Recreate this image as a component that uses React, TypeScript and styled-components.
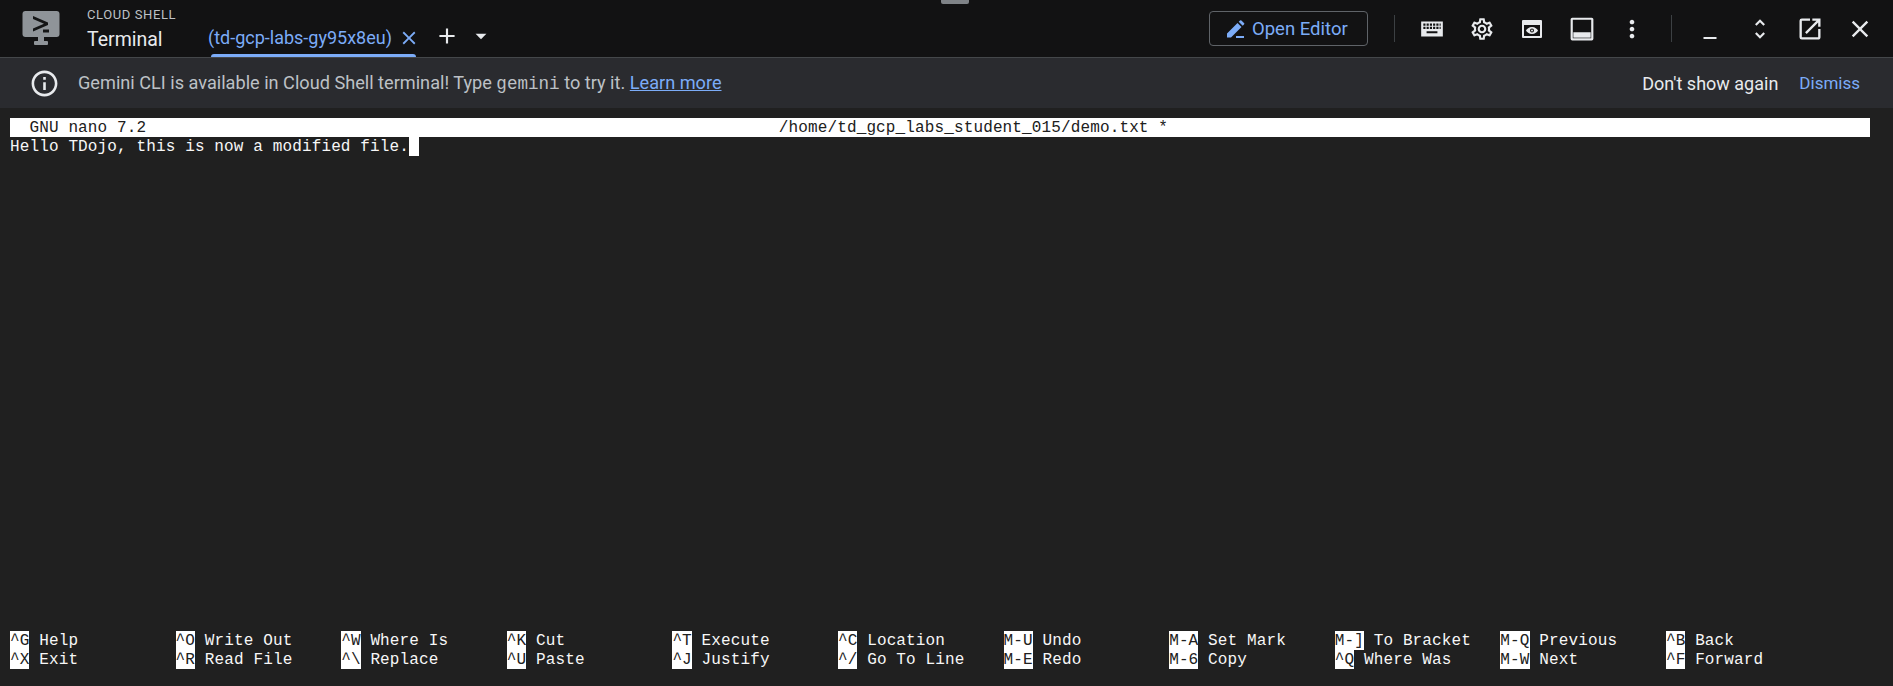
import React from "react";
import styled, { createGlobalStyle } from "styled-components";
import {
  MdAdd,
  MdArrowDropDown,
  MdClose,
  MdInfoOutline,
  MdMoreVert,
  MdOpenInNew,
  MdOutlineSettings,
  MdUnfoldMore,
} from "react-icons/md";

const CELL = 9.73;

const GlobalStyle = createGlobalStyle`
  html, body {
    margin: 0;
    height: 100%;
    overflow: hidden;
    background: #202020;
  }
  #root {
    height: 100%;
  }
`;

const Shell = styled.div`
  position: relative;
  display: flex;
  flex-direction: column;
  height: 686px;
  font-family: Roboto, "Liberation Sans", sans-serif;
`;

const DragHandle = styled.div`
  position: absolute;
  top: 0;
  left: 941px;
  width: 28px;
  height: 4px;
  border-radius: 0 0 2px 2px;
  background: #7f8387;
`;

const Header = styled.header`
  display: flex;
  align-items: stretch;
  flex: none;
  height: 57px;
  padding-left: 22px;
  background: #121213;
  border-bottom: 1px solid #44474a;
`;

const Logo = styled.div`
  display: flex;
  align-items: center;
  width: 65px;
  flex: none;
`;

const Titles = styled.div`
  display: flex;
  flex-direction: column;
  width: 122px;
  flex: none;
  padding-top: 7px;
`;

const Overline = styled.div`
  font-size: 13px;
  line-height: 16px;
  letter-spacing: 0.6px;
  color: #bdc1c6;
`;

const TerminalTitle = styled.div`
  margin-top: 5px;
  font-size: 19.5px;
  line-height: 24px;
  color: #e8eaed;
`;

const Tab = styled.div`
  position: relative;
  display: flex;
  align-items: center;
  gap: 6px;
  width: 205px;
  height: 57px;
  flex: none;
  box-sizing: border-box;
  margin-left: 2px;
  padding-top: 18px;
  color: #7cacf8;
  font-size: 18px;
  white-space: nowrap;

  &::after {
    content: "";
    position: absolute;
    left: 0;
    right: 0;
    bottom: 0;
    height: 3px;
    border-radius: 3px 3px 0 0;
    background: #7cacf8;
  }
`;

const TabText = styled.span`
  margin-left: -3px;
`;

const TabAction = styled.span<{ $blue?: boolean }>`
  display: flex;
  align-items: center;
  justify-content: center;
  color: ${(p) => (p.$blue ? "#7cacf8" : "#e8eaed")};
`;

const TabActions = styled.div`
  display: flex;
  align-items: center;
  gap: 8px;
  margin-left: 18px;
  padding-top: 14px;
`;

const Actions = styled.div`
  display: flex;
  align-items: center;
  margin-left: auto;
  padding-right: 8px;
`;

const EditorButton = styled.button`
  display: flex;
  align-items: center;
  gap: 7px;
  width: 159px;
  height: 35px;
  box-sizing: border-box;
  padding: 0 0 0 17px;
  background: transparent;
  border: 1px solid #5f6368;
  border-radius: 4px;
  color: #7cacf8;
  font-family: inherit;
  font-size: 18.500px;
`;

const Divider = styled.div<{ $left: number; $right: number }>`
  width: 1px;
  height: 27px;
  background: #3c4043;
  margin: ${(p) => `0 ${p.$right}px 0 ${p.$left}px`};
`;

const IconButton = styled.span`
  display: flex;
  align-items: center;
  justify-content: center;
  width: 50px;
  height: 50px;
  color: #e8eaed;
`;

const Banner = styled.div`
  display: flex;
  align-items: center;
  flex: none;
  height: 50px;
  padding: 0 33px 0 29px;
  background: #2a2b2f;
  font-size: 18.150px;
  color: #bdc1c6;
`;

const BannerMessage = styled.div`
  margin-left: 18px;
  white-space: pre;
`;

const InlineCode = styled.code`
  font-family: "Liberation Mono", monospace;
  font-size: 17.600px;
`;

const BannerLink = styled.a`
  color: #7cacf8;
  text-decoration: underline;
`;

const BannerActions = styled.div`
  display: flex;
  align-items: center;
  gap: 21px;
  margin-left: auto;
`;

const DontShow = styled.span`
  font-size: 18px;
  color: #e8eaed;
`;

const Dismiss = styled.span`
  font-size: 17px;
  color: #7cacf8;
`;

const Terminal = styled.main`
  display: flex;
  flex-direction: column;
  flex: 1;
  min-height: 0;
  padding: 10px 23px 17px 10px;
  background: #202020;
  font-family: "Liberation Mono", monospace;
  font-size: 16px;
  letter-spacing: 0.13px;
  line-height: 21px;
  color: #f7f7f7;
`;

const Line = styled.div`
  height: 19px;
  white-space: pre;
  flex: none;
`;

const TitleLine = styled(Line)`
  background: #fff;
  color: #202020;
`;

const Cursor = styled.span`
  display: inline-block;
  width: ${CELL}px;
  height: 19px;
  vertical-align: top;
  background: #fff;
`;

const Shortcuts = styled.div`
  display: grid;
  grid-template-columns: repeat(11, 165.6px);
  grid-auto-flow: column;
  grid-template-rows: 19px 19px;
  margin-top: auto;
`;

const Shortcut = styled.div`
  white-space: pre;
  height: 19px;
`;

const Key = styled.span`
  background: #fff;
  color: #202020;
  display: inline-block;
  height: 19px;
  vertical-align: top;
`;

const shortcuts: [string, string][] = [
  ["^G", "Help"],
  ["^X", "Exit"],
  ["^O", "Write Out"],
  ["^R", "Read File"],
  ["^W", "Where Is"],
  ["^\\", "Replace"],
  ["^K", "Cut"],
  ["^U", "Paste"],
  ["^T", "Execute"],
  ["^J", "Justify"],
  ["^C", "Location"],
  ["^/", "Go To Line"],
  ["M-U", "Undo"],
  ["M-E", "Redo"],
  ["M-A", "Set Mark"],
  ["M-6", "Copy"],
  ["M-]", "To Bracket"],
  ["^Q", "Where Was"],
  ["M-Q", "Previous"],
  ["M-W", "Next"],
  ["^B", "Back"],
  ["^F", "Forward"],
];

const App = () => {
  return (
    <Shell>
      <GlobalStyle />
      <DragHandle />
      <Header>
        <Logo>
          <svg width="38" height="36" viewBox="0 0 38 36">
            <rect x="0.5" y="0" width="37" height="26" rx="3" fill="#8f9499" />
            <rect x="16" y="26" width="6" height="5" fill="#8f9499" />
            <rect x="12" y="30" width="14" height="4" rx="1" fill="#8f9499" />
            <path d="M11 5l15 6.500v2.500L11 20.500v-3l11-4.800L11 8z" fill="#141516" />
            <rect x="21" y="18.500" width="6" height="3" fill="#141516" />
          </svg>
        </Logo>
        <Titles>
          <Overline>CLOUD SHELL</Overline>
          <TerminalTitle>Terminal</TerminalTitle>
        </Titles>
        <Tab>
          <TabText>(td-gcp-labs-gy95x8eu)</TabText>
          <TabAction $blue>
            <MdClose size={22} />
          </TabAction>
        </Tab>
        <TabActions>
          <TabAction>
            <MdAdd size={26} />
          </TabAction>
          <TabAction>
            <MdArrowDropDown size={26} />
          </TabAction>
        </TabActions>
        <Actions>
          <EditorButton>
            <svg width="18" height="18" viewBox="0 0 18 18" fill="currentColor">
              <path d="M0 13.500L10.500 3l4 4L4 17.500H0zM11.700 1.800L13 .5a1 1 0 0 1 1.400 0L17 3.100a1 1 0 0 1 0 1.400l-1.300 1.300z" />
              <rect x="9" y="16" width="8" height="2" />
            </svg>
            Open Editor
          </EditorButton>
          <Divider $left={26} $right={12} />
          <IconButton>
            <svg width="26" height="26" viewBox="0 0 24 24" fill="currentColor">
              <path d="M2 5h20v14H2zM4 7v2h2V7zm3 0v2h2V7zm3 0v2h2V7zm3 0v2h2V7zm3 0v2h2V7zm3 0v2h1V7zM4 10v2h2v-2zm3 0v2h2v-2zm3 0v2h2v-2zm3 0v2h2v-2zm3 0v2h2v-2zm3 0v2h1v-2zM7 14v2h10v-2z" fillRule="evenodd" />
            </svg>
          </IconButton>
          <IconButton>
            <MdOutlineSettings size={26} />
          </IconButton>
          <IconButton>
            <svg width="24" height="24" viewBox="0 0 24 24" fill="currentColor">
              <path fillRule="evenodd" d="M3 3h18a1 1 0 0 1 1 1v16a1 1 0 0 1-1 1H3a1 1 0 0 1-1-1V4a1 1 0 0 1 1-1zm1 5v11h16V8zm8 2c3 0 5.200 2 6 3.500-.8 1.500-3 3.500-6 3.500s-5.200-2-6-3.500c.8-1.500 3-3.500 6-3.500zm0 1.500a2 2 0 1 0 0 4 2 2 0 0 0 0-4z" />
              <circle cx="12" cy="13.500" r="1" />
            </svg>
          </IconButton>
          <IconButton>
            <svg width="26" height="26" viewBox="0 0 24 24" fill="currentColor">
              <path fillRule="evenodd" d="M3 1.500h18a1.500 1.500 0 0 1 1.500 1.500v18a1.500 1.500 0 0 1-1.500 1.500H3A1.500 1.500 0 0 1 1.500 21V3A1.500 1.500 0 0 1 3 1.500zm.5 2v17h17v-17z" />
              <rect x="4" y="15" width="16" height="5" />
            </svg>
          </IconButton>
          <IconButton>
            <MdMoreVert size={28} />
          </IconButton>
          <Divider $left={14} $right={13} />
          <IconButton>
            <svg width="24" height="24" viewBox="0 0 24 24" fill="currentColor">
              <rect x="5.500" y="20" width="13" height="2" />
            </svg>
          </IconButton>
          <IconButton>
            <MdUnfoldMore size={26} />
          </IconButton>
          <IconButton>
            <MdOpenInNew size={28} />
          </IconButton>
          <IconButton>
            <MdClose size={28} />
          </IconButton>
        </Actions>
      </Header>
      <Banner>
        <MdInfoOutline size={31} color="#e8eaed" />
        <BannerMessage>
          Gemini CLI is available in Cloud Shell terminal! Type <InlineCode>gemini</InlineCode> to try it.{" "}
          <BannerLink>Learn more</BannerLink>
        </BannerMessage>
        <BannerActions>
          <DontShow>Don't show again</DontShow>
          <Dismiss>Dismiss</Dismiss>
        </BannerActions>
      </Banner>
      <Terminal>
        <TitleLine>
          {"  GNU nano 7.2" + " ".repeat(65) + "/home/td_gcp_labs_student_015/demo.txt *"}
        </TitleLine>
        <Line>
          Hello TDojo, this is now a modified file.
          <Cursor />
        </Line>
        <Shortcuts>
          {shortcuts.map(([key, label]) => (
            <Shortcut key={key}>
              <Key>{key}</Key> {label}
            </Shortcut>
          ))}
        </Shortcuts>
      </Terminal>
    </Shell>
  );
};

export default App;
